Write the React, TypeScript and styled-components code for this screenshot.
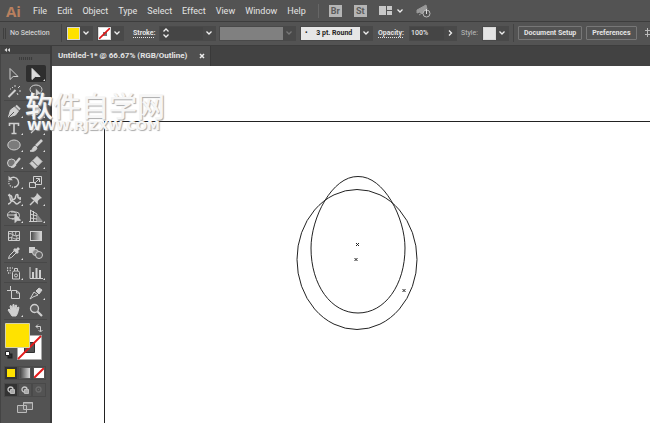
import React from "react";
import styled, { createGlobalStyle, css } from "styled-components";

const c = {
  bar: "#535353",
  deep: "#424242",
  field: "#454545",
  line: "#3d3d3d",
  text: "#e4e4e4",
  icon: "#cfcfcf",
  yellow: "#ffe200",
};

const Global = createGlobalStyle`
  * { box-sizing: border-box; }
  body { margin: 0; background: ${c.bar}; color: ${c.text}; font-family: Roboto, "Open Sans", sans-serif; font-size: 7px; line-height: 12px; overflow: hidden; }
  button, input, select { font: inherit; color: inherit; margin: 0; padding: 0; border: 0; background: none; border-radius: 0; }
  svg { display: block; flex: none; }
`;

const Shell = styled.div`
  min-height: 100vh;
  display: flex;
  flex-direction: column;
  position: relative;
`;

const MenuBar = styled.header`
  height: 22px;
  display: flex;
  align-items: center;
  padding-left: 6px;
  background: ${c.bar};
  border-bottom: 1px solid ${c.line};
`;

const Logo = styled.span`
  width: 27px;
  font: 700 15px/20px "Open Sans", sans-serif;
  color: #b8805f;
`;

const Menus = styled.nav`
  display: flex;
  gap: 10px;
`;

const MenuButton = styled.button`
  && { font-size: 9px; line-height: 14px; }
`;

const MenuTools = styled.div`
  display: flex;
  align-items: center;
  margin-left: 12px;
  padding-left: 10px;
  border-left: 1px solid #666;
  gap: 12px;
`;

const AppBadge = styled.button`
  width: 13px;
  height: 12px;
  && { background: #b5b5b5; color: #5c5c5c; font-size: 9px; font-weight: 700; line-height: 12px; }
`;

const PlainButton = styled.button`
  display: flex;
  align-items: center;
  gap: 4px;
`;

const ControlBar = styled.div`
  height: 24px;
  display: flex;
  align-items: center;
  padding: 0 0 1px 3px;
  background: ${c.bar};
  border-bottom: 1px solid ${c.line};
  white-space: nowrap;
  overflow: hidden;
`;

const Grip = styled.i`
  flex: none;
  width: 3px;
  height: 11px;
  margin-right: 4px;
  border-left: 1px solid #3f3f3f;
  border-right: 1px solid #3f3f3f;
`;

const Status = styled.span`
  flex: none;
  width: 51px;
`;

const Divider = styled.i`
  flex: none;
  width: 1px;
  height: 18px;
  margin-right: 4px;
  background: #434343;
`;

const Group = styled.div<{ $after: number }>`
  display: flex;
  flex: none;
  height: 15px;
  margin-right: ${(p) => p.$after}px;
  border: 1px solid #494949;
  background: ${c.field};
`;

const Swatch = styled.button<{ $color: string }>`
  width: 13px;
  height: 13px;
  && { background: ${(p) => p.$color}; border: 1px solid #d8d8d8; }
`;

const DropButton = styled.button`
  width: 12px;
  height: 13px;
  display: flex;
  align-items: center;
  justify-content: center;
  && { background: #494949; }
`;

const Label = styled.label<{ $width: number; $linked?: boolean; $dim?: boolean }>`
  flex: none;
  width: ${(p) => p.$width}px;
  color: ${(p) => (p.$dim ? "#bdbdbd" : c.text)};
  ${(p) => p.$linked && css`
    font-weight: 700;
    text-decoration: underline dotted;
    text-underline-offset: 2px;
  `}
`;

const Stepper = styled.div`
  width: 12px;
  display: flex;
  flex-direction: column;
  align-items: center;
  justify-content: space-around;
  button { height: 6px; display: flex; align-items: center; }
`;

const TextBox = styled.input<{ $width: number; $muted?: boolean }>`
  width: ${(p) => p.$width}px;
  && { padding-left: 1px; font-weight: 500; ${(p) => p.$muted && css`background: #808080;`} }
`;

const BrushSelect = styled.select`
  appearance: none;
  width: 59px;
  && { background: #e6e6e6; color: #222; padding-left: 4px; font-weight: 700; white-space: pre; }
`;

const ActionButton = styled.button<{ $after: number }>`
  flex: none;
  height: 14px;
  && {
    padding: 0 5px;
    margin-right: ${(p) => p.$after}px;
    border: 1px solid #777;
    border-radius: 1px;
    font-weight: 700;
  }
`;

const Workspace = styled.div`
  flex: 1;
  display: grid;
  grid-template-columns: 52px 1fr;
`;

const ToolPanel = styled.aside`
  border-left: 1px solid #444;
  border-right: 2px solid #3b3b3b;
  background: ${c.bar};
`;

const PanelHead = styled.div`
  height: 8px;
  padding: 1px 0 0 3px;
  background: ${c.deep};
`;

const PanelGrip = styled.div`
  width: 14px;
  height: 3px;
  margin: 3px auto 5px;
  background: repeating-linear-gradient(90deg, #3c3c3c 0 1px, #505050 1px 2px);
`;

const ToolGroup = styled.div`
  margin: 0 3px;
  display: grid;
  grid-template-columns: 20px 20px;
  column-gap: 2px;
  padding-bottom: 1px;
  & + & { border-top: 1px solid #484848; padding-top: 1px; }
`;

const ToolButton = styled.button<{ $on: boolean; $more: boolean }>`
  height: 17px;
  position: relative;
  display: grid;
  place-items: center;
  && { ${(p) => p.$on && css`background: #2e2e2e; border-radius: 2px;`} }
  ${(p) => p.$more && css`
    &::after {
      content: "";
      position: absolute;
      right: 1px;
      bottom: 1px;
      border: 1px solid transparent;
      border-right-color: #ddd;
      border-bottom-color: #ddd;
    }
  `}
`;

const Paints = styled.div`
  position: relative;
  height: 44px;
  margin: 0 3px;
  border-top: 1px solid #484848;
`;

const PaintSlot = styled.button<{ $x: number; $y: number }>`
  position: absolute;
  left: ${(p) => p.$x}px;
  top: ${(p) => p.$y}px;
`;

const ModeRow = styled.div`
  display: grid;
  grid-template-columns: repeat(3, 14px);
  height: 14px;
  margin: 3px 3px 0;
  && button { display: grid; place-items: center; border: 1px solid #494949; }
  && button:first-child { background: #333; }
`;

const ScreenMode = styled.button`
  display: block;
  && { margin: 4px auto 0; }
`;

const Documents = styled.main`
  min-width: 0;
  display: flex;
  flex-direction: column;
`;

const TabStrip = styled.div`
  height: 20px;
  background: ${c.deep};
  display: flex;
`;

const Tab = styled.div`
  display: flex;
  align-items: center;
  gap: 12px;
  padding: 0 5px 0 6px;
  background: #505050;
  border-right: 1px solid #393939;
  font-size: 8px;
  font-weight: 700;
`;

const Canvas = styled.section`
  flex: 1;
  background: #fff;
  padding: 55px 0 0 52px;
  display: flex;
`;

const Artboard = styled.div`
  flex: 1;
  border-top: 1px solid #222;
  border-left: 1px solid #222;
  padding: 50px 0 0 187px;
`;

const Watermark = styled.div`
  position: absolute;
  left: 25px;
  top: 91px;
  pointer-events: none;
  color: #f6f6f6;
  text-shadow: 1px 1px 1px #aaa;
`;

const MarkTitle = styled.div`
  font: 500 28px/29px "Noto Sans CJK SC", sans-serif;
`;

const MarkSite = styled.div`
  margin: 1px 0 0 2px;
  font: 700 13px/10px "DejaVu Sans", sans-serif;
`;

const Chevron = ({ dir = "down", dim = false }: { dir?: "up" | "down" | "right"; dim?: boolean }) => (
  <svg width="8" height="6" viewBox="0 0 8 6" fill="none" stroke={dim ? "#777" : "#eee"} strokeWidth="1.3">
    <path d={dir === "down" ? "M1.5 1.5 4 4 6.5 1.5" : dir === "up" ? "M1.5 4.5 4 2 6.5 4.5" : "M3 .5 5.5 3 3 5.5"} />
  </svg>
);

const arrow = "M3 1.5v11l3.2-3H11z";

type Tool = { name: string; art: React.ReactNode; on?: boolean; plain?: boolean };

const groups: Tool[][] = [
  [
    { name: "Selection", plain: true, art: <path d={arrow} /> },
    { name: "Direct Selection", on: true, art: <path d={arrow} fill="#ddd" stroke="#ddd" /> },
    { name: "Magic Wand", plain: true, art: <><path d="m1.5 13 7-7" strokeWidth="2" /><path d="M8 1v2M5 3l1 1M13 2l-2 2M12 7h2M10 9l1 2M3 5h1" /></> },
    { name: "Lasso", plain: true, art: <><ellipse cx="7" cy="5.5" rx="6" ry="4.5" /><path d="M3 9c-1 2 1 2 1 4" /><path d="M6.5 4v9l2.5-2.5H13z" fill={c.icon} stroke="#535353" strokeWidth=".6" /></> },
  ],
  [
    { name: "Pen", art: <><path d="m1.5 13 2-7 4-3 4 4-3 4z" fill={c.icon} /><path d="m9 1.5 4 4" strokeWidth="2.2" /><path d="m2 13 5-5" stroke="#535353" /></> },
    { name: "Curvature", art: <><path d="m3 12 2-6 4-3 3 3-3 4z" fill={c.icon} /><path d="M2 4c2-3 4-3 5-1" /></> },
    { name: "Type", art: <path d="M2.5 5V2.5h9V5M7 2.5v10M4.5 12.5h5" strokeWidth="1.6" /> },
    { name: "Line Segment", art: <path d="M2 12 12 2" strokeWidth="1.3" /> },
    { name: "Ellipse", art: <ellipse cx="7" cy="7" rx="6.2" ry="5" fill="#7b7b7b" /> },
    { name: "Paintbrush", art: <><path d="m7 8 6-6" strokeWidth="2.6" /><path d="M1 13c3 0 2-4 5-5l2 2c-1 3-4 4-7 3z" fill={c.icon} /></> },
    { name: "Blob Brush", art: <><circle cx="4.5" cy="8" r="4" fill="#777" /><path d="m8 9 5-6" strokeWidth="2.4" /><path d="M4 12c2 0 2-3 4-3l1 1c-1 2-3 3-5 2z" fill={c.icon} /></> },
    { name: "Eraser", art: <><path d="m1 8.5 7-7 5 5-7 7z" fill={c.icon} /><path d="m3.5 6 5 5" stroke="#535353" /></> },
  ],
  [
    { name: "Rotate", art: <><path d="M3 3.8a5 5 0 1 1 4 8.5" strokeWidth="1.4" /><path d="M6 12.2A5 5 0 0 1 2 6" strokeDasharray="1.2 1.2" strokeWidth="1.3" /><path d="M1.5.8v4.4h4.4z" fill={c.icon} stroke="none" /></> },
    { name: "Scale", art: <><path d="M.5 7.5h6v5h-6zM4.5 7V1.5h8v8H7" /><path d="m5.5 8.5 4.5-4.5M7 3.5h3.5V7" /></> },
    { name: "Width", art: <><path d="M1 3.5c3-1 4 1 4 3s2 1 3 0 0-4 2-4 0 3 1.500 3.500S14 4 13 8" strokeWidth="1.5" /><path d="M2 2c2 3 0 7 3 7s3 3 5 3 2-3 4-2M1 12c2 0 3-2 5-5" strokeWidth="1.4" /></> },
    { name: "Puppet Warp", art: <><path d="M8 1 13 6l-2 .8-2.2 2.2V12.5L1.5 5.5H5l2.2-2.3z" fill={c.icon} stroke="none" /><path d="m5 9-4 4" strokeWidth="1.5" /></> },
    { name: "Shape Builder", art: <><ellipse cx="5" cy="6" rx="4.5" ry="3.8" /><path d="M4 3h5a3.5 3.5 0 0 1 0 7H5M1 6h8" /><path d="M8 5v8.5l2.2-2.2H13.5z" fill={c.icon} /></> },
    { name: "Perspective Grid", art: <><path d="M1.5 1v12M4.5 2v11M1 1l7 4v8M1 5l7 2M1 9l7 1M0 12.5h13" /><path d="M8 5l6 7.5H8z" fill="#8b8b8b" stroke="none" /></> },
  ],
  [
    { name: "Mesh", plain: true, art: <><path d="M1.5 2.5h11v9h-11z" /><path d="M2 5c3-2 4 4 10 1M2 9c4-2 5 3 10 0M5 3c3 4-2 4 0 8M9 3c-2 4 3 4 0 8" /></> },
    { name: "Gradient", plain: true, art: <rect x="1.5" y="2.5" width="11" height="9" fill="url(#toolFade)" /> },
    { name: "Eyedropper", art: <><path d="m1.5 12.5 1-3 5.5-5.5 2 2-5.5 5.5z" /><path d="m7 3 4 4M9.5 4.5l2.5-2.5" strokeWidth="2.8" /></> },
    { name: "Blend", plain: true, art: <><rect x=".5" y="1.5" width="5" height="5" fill={c.icon} /><circle cx="6.5" cy="6.5" r="3" fill="#888" /><circle cx="10" cy="9" r="3.5" fill="#606060" /></> },
  ],
  [
    { name: "Symbol Sprayer", art: <><path d="M5.5 6.5 6.5 5h5l1 1.5v6.5h-7zM7.5 5V2.5h3V5" /><circle cx="9" cy="9.5" r="1.5" /><path d="M0 2h6M0 4.5h5M1 7h3" strokeDasharray="1.2 1.4" strokeWidth="1.4" /></> },
    { name: "Column Graph", art: <><path d="M1 1v11.5h13" /><path d="M4 12V6M7.5 12V2M11 12V4" strokeWidth="2" /></> },
  ],
  [
    { name: "Artboard", plain: true, art: <path d="M3.5 0v4M0 4.5h4M4.5 4.5h5l3 2.5V12.5H4.5zM9.5 4.5V7h3" /> },
    { name: "Slice", art: <><path d="m1 13 4-7 4 3-5 2z" /><path d="m7 5 3-3 3 2-3 4z" fill={c.icon} /></> },
    { name: "Hand", art: <path d="M5 13 1 7l1-1 2 2-1-5 1-.5L5.5 6 6 1.5h1L7.5 6l1.2-4 1 .3L9 7l2-3 1 .5-1.5 6L9 13z" fill={c.icon} /> },
    { name: "Zoom", plain: true, art: <><circle cx="5.5" cy="5.5" r="4" strokeWidth="1.3" fill="#606060" /><path d="m8.5 8.5 4.5 4.5" strokeWidth="2.2" /></> },
  ],
];

const Art = ({ children }: { children: React.ReactNode }) => (
  <svg width="14" height="14" viewBox="0 0 14 14" fill="none" stroke={c.icon}>{children}</svg>
);

const NoneSwatch = () => (
  <svg width="11" height="11" viewBox="0 0 11 11">
    <rect width="11" height="11" fill="#fff" />
    <rect x="4" y="4" width="4" height="4" fill="#777" />
    <path d="M0 11 11 0" stroke="#e01818" strokeWidth="1.6" />
  </svg>
);

const marks = [[357.5, 244.5], [356, 259.5], [404, 290.5]];

export default function App() {
  return (
    <Shell>
      <Global />
      <MenuBar>
        <Logo>Ai</Logo>
        <Menus>
          {["File", "Edit", "Object", "Type", "Select", "Effect", "View", "Window", "Help"].map((m) => (
            <MenuButton key={m}>{m}</MenuButton>
          ))}
        </Menus>
        <MenuTools>
          <AppBadge>Br</AppBadge>
          <AppBadge>St</AppBadge>
          <PlainButton aria-label="Arrange documents">
            <svg width="13" height="9" fill="#c8c8c8"><path d="M0 0h7v9H0zM8 0h5v4H8zM8 5h5v4H8z" /></svg>
            <Chevron />
          </PlainButton>
          <PlainButton aria-label="GPU performance">
            <svg width="15" height="14" viewBox="0 0 15 14" fill="none" stroke="#999">
              <path d="M1 6 10 1l1 4-5 5-2-2-3 1zM3 11l3-2" fill="#999" />
              <circle cx="10.5" cy="9.5" r="3.5" fill="#535353" stroke="#bbb" /><path d="M10.5 5v5" stroke="#ddd" />
            </svg>
          </PlainButton>
        </MenuTools>
      </MenuBar>

      <ControlBar>
        <Grip />
        <Status>No Selection</Status>
        <Divider />
        <Group $after={4}>
          <Swatch $color={c.yellow} aria-label="Fill" />
          <DropButton aria-label="Fill options"><Chevron /></DropButton>
        </Group>
        <Group $after={9}>
          <Swatch $color="#fff" aria-label="Stroke color"><NoneSwatch /></Swatch>
          <DropButton aria-label="Stroke color options"><Chevron /></DropButton>
        </Group>
        <Label $width={26} $linked htmlFor="weight">Stroke:</Label>
        <Group $after={3}>
          <Stepper>
            <button aria-label="Increase stroke"><Chevron dir="up" /></button>
            <button aria-label="Decrease stroke"><Chevron /></button>
          </Stepper>
          <TextBox id="weight" $width={31} />
          <DropButton aria-label="Stroke weights"><Chevron /></DropButton>
        </Group>
        <Group $after={4}>
          <TextBox $width={63} $muted disabled aria-label="Width profile" />
          <DropButton disabled aria-label="Width profiles"><Chevron dim /></DropButton>
        </Group>
        <Group $after={5}>
          <BrushSelect aria-label="Brush definition"><option>{"•\u00a0\u00a0\u00a0\u00a0\u00a03 pt. Round"}</option></BrushSelect>
          <DropButton aria-label="Brushes"><Chevron /></DropButton>
        </Group>
        <Label $width={31} $linked htmlFor="opacity">Opacity:</Label>
        <Group $after={4}>
          <TextBox id="opacity" $width={34} defaultValue="100%" />
          <DropButton aria-label="Opacity slider"><Chevron dir="right" /></DropButton>
        </Group>
        <Label $width={21} $dim htmlFor="style">Style:</Label>
        <Group $after={4}>
          <Swatch id="style" $color="#e4e4e4" />
          <DropButton aria-label="Graphic styles"><Chevron /></DropButton>
        </Group>
        <Divider />
        <ActionButton $after={4}>Document Setup</ActionButton>
        <ActionButton $after={8}>Preferences</ActionButton>
        <PlainButton aria-label="Align">
          <svg width="12" height="10" fill="none" stroke="#bbb"><path d="M2.5 0v9M0 2.5h8M0 6.5h8M7.5 1v8" /></svg>
        </PlainButton>
      </ControlBar>

      <Workspace>
        <ToolPanel>
          <PanelHead>
            <svg width="7" height="6" viewBox="0 0 7 6" fill="#ddd"><path d="M3 1v4L.5 3zM6 1v4L3.5 3z" /></svg>
          </PanelHead>
          <PanelGrip />
          <svg width="0" height="0">
            <linearGradient id="toolFade"><stop stopColor="#444" /><stop offset="1" stopColor="#ddd" /></linearGradient>
          </svg>
          {groups.map((tools, i) => (
            <ToolGroup key={i}>
              {tools.map((t) => (
                <ToolButton key={t.name} aria-label={t.name} $on={!!t.on} $more={!t.plain}>
                  <Art>{t.art}</Art>
                </ToolButton>
              ))}
            </ToolGroup>
          ))}
          <Paints>
            <PaintSlot $x={13} $y={15} aria-label="Stroke">
              <svg width="25" height="25">
                <path d="M.5.5h24v24H.5z" fill="#fff" stroke="#aaa" />
                <path d="M7.5 7.5h10v10h-10z" fill="#535353" stroke="#333" />
                <path d="M1 24 24 1" stroke="#e31b1b" strokeWidth="1.8" />
              </svg>
            </PaintSlot>
            <PaintSlot $x={1} $y={3} aria-label="Fill">
              <svg width="25" height="25"><path d="M.5.5h24v24H.5z" fill={c.yellow} stroke="#d8d4aa" /></svg>
            </PaintSlot>
            <PaintSlot $x={31} $y={4} aria-label="Swap fill and stroke">
              <svg width="9" height="9" fill="none" stroke={c.icon}><path d="M1 2.5h4.5v5M3 .5l-2 2 2 2M3.5 6l2 2 2-2" /></svg>
            </PaintSlot>
            <PaintSlot $x={1} $y={31} aria-label="Default fill and stroke">
              <svg width="8" height="8"><path d="M3.5 3.5h3v3h-3z" fill="none" stroke="#222" strokeWidth="2" /><path d="M.5.5h4v4h-4z" fill="#fff" stroke="#222" /></svg>
            </PaintSlot>
          </Paints>
          <ModeRow>
            <button aria-label="Color"><svg width="8" height="8"><path d="M0 0h8v8H0z" fill={c.yellow} /></svg></button>
            <button aria-label="Gradient"><svg width="10" height="10"><path d="M0 0h10v10H0z" fill="url(#toolFade)" /></svg></button>
            <button aria-label="None"><svg width="10" height="10"><path d="M0 0h10v10H0z" fill="#fff" /><path d="M0 10 10 0" stroke="#e31b1b" strokeWidth="2" /></svg></button>
          </ModeRow>
          <ModeRow>
            {["Draw Normal", "Draw Behind", "Draw Inside"].map((m, i) => (
              <button key={m} aria-label={m} disabled={i === 2}>
                <svg width="8" height="8" stroke={i === 2 ? "#6c6c6c" : "#c4c4c4"}>
                  <circle cx="3.5" cy="3.5" r="2.5" fill="none" strokeWidth="1.4" />
                  {i < 2 && <path d="M3.5 3.5h4v4h-4z" fill="#aaa" stroke="#bbb" />}
                  {i === 2 && <path d="M3 3h1v1H3z" fill="#6c6c6c" stroke="none" />}
                </svg>
              </button>
            ))}
          </ModeRow>
          <ScreenMode aria-label="Change screen mode">
            <svg width="17" height="13" stroke="#bbb" fill="#666"><path d="M.5 4.5h9v7h-9zM6.5 1.5h9v7h-9z" /><path d="M6 2h10" /></svg>
          </ScreenMode>
        </ToolPanel>

        <Documents>
          <TabStrip>
            <Tab>
              <span>Untitled-1* @ 66.67% (RGB/Outline)</span>
              <PlainButton aria-label="Close document">
                <svg width="6" height="6" stroke="#eee" strokeWidth="1.5"><path d="m1 1 4 4M5 1 1 5" /></svg>
              </PlainButton>
            </Tab>
          </TabStrip>
          <Canvas>
            <Artboard>
              <svg width="130" height="162" viewBox="292 172 130 162" fill="none" stroke="#222" strokeWidth="1">
                <ellipse cx="357" cy="259.5" rx="60" ry="70" />
                <path d="M358 176.5C384 176 405 218 405 248C405 285 385 313 358 313C331 313 311 285 311 248C311 218 332 176 358 176.5Z" />
                {marks.map(([x, y]) => (
                  <path key={y} d={`M${x - 1.5} ${y - 1.5}l3 3m0-3l-3 3`} />
                ))}
              </svg>
            </Artboard>
          </Canvas>
        </Documents>
      </Workspace>

      <Watermark>
        <MarkTitle>软件自学网</MarkTitle>
        <MarkSite>WWW.RJZXW.COM</MarkSite>
      </Watermark>
    </Shell>
  );
}
